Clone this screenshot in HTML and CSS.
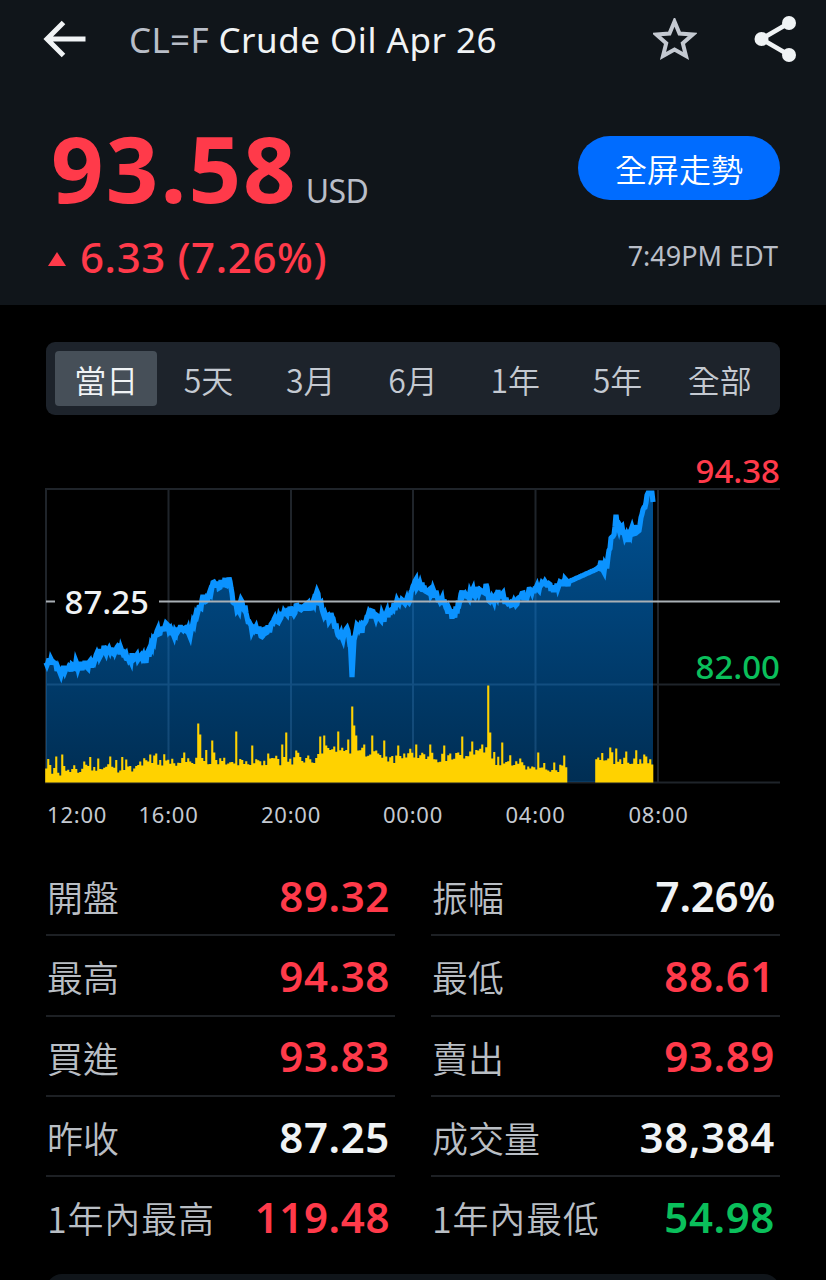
FILE: index.html
```html
<!DOCTYPE html>
<html lang="zh-Hant">
<head>
    <meta charset="UTF-8">
    <title>CL=F Crude Oil Apr 26</title>
    <link rel="stylesheet" href="styles.css">
</head>
<body>
    <header>
        <div class="topbar">
            <svg class="back" width="44" height="40" viewBox="0 0 44 40">
                <path d="M42.500 19H4M20.500 2.500L4 19l16.500 16.500" fill="none" stroke="#f0f3f5" stroke-width="5"/>
            </svg>
            <h1><span class="symbol">CL=F</span> Crude Oil Apr 26</h1>
            <svg class="star" width="44" height="44" viewBox="0 0 44 44">
                <path d="M21.500 3.500l5 12 13.300 1-10 8.800 3.200 12.700-11.500-6.500L10 38l3.200-12.700-10-8.800 13.300-1z" fill="none" stroke="#c4c9d1" stroke-width="4"/>
            </svg>
            <svg class="share" width="44" height="48" viewBox="0 0 44 48">
                <path d="M35 7L7.500 23 35 39" fill="none" stroke="#f0f3f5" stroke-width="4.500"/>
                <circle cx="35" cy="7" r="7" fill="#f0f3f5"/>
                <circle cx="7.500" cy="23" r="7" fill="#f0f3f5"/>
                <circle cx="35" cy="39" r="7" fill="#f0f3f5"/>
            </svg>
        </div>
        <div class="quote">
            <div class="price">93.58<span class="currency">USD</span></div>
            <button type="button">全屏走勢</button>
        </div>
        <div class="change-row">
            <div class="change"><span class="triangle"></span>6.33 (7.26%)</div>
            <div class="time">7:49PM EDT</div>
        </div>
    </header>

    <nav>
        <a class="active">當日</a>
        <a>5天</a>
        <a>3月</a>
        <a>6月</a>
        <a>1年</a>
        <a>5年</a>
        <a>全部</a>
    </nav>

    <svg id="chart" width="826" height="400" viewBox="0 440 826 400">
        <defs>
            <linearGradient id="areaFill" gradientUnits="userSpaceOnUse" x1="0" y1="489" x2="0" y2="782">
                <stop offset="0" stop-color="#0087f5" stop-opacity="0.6"/>
                <stop offset="1" stop-color="#0087f5" stop-opacity="0.34"/>
            </linearGradient>
        </defs>
        <path class="grid" d="M45 489H780M45 684.500H780M45 782.500H780M46 489V783M168.500 489V783M291 489V783M413 489V783M535.500 489V783M658 489V783"/>
        <path id="area" fill="url(#areaFill)"/>
        <path id="volume"/>
        <path id="line"/>
        <path class="prev" d="M46 601.500H55M159 601.500H780"/>
        <text class="prev-label" x="64.500" y="614">87.25</text>
        <text class="high" x="780" y="482.500" text-anchor="end">94.38</text>
        <text class="low" x="780" y="678.500" text-anchor="end">82.00</text>
        <g class="axis">
            <text x="47" y="823">12:00</text>
            <text x="168.500" y="823" text-anchor="middle">16:00</text>
            <text x="291" y="823" text-anchor="middle">20:00</text>
            <text x="413" y="823" text-anchor="middle">00:00</text>
            <text x="535.500" y="823" text-anchor="middle">04:00</text>
            <text x="658.500" y="823" text-anchor="middle">08:00</text>
        </g>
    </svg>

    <section class="stats">
        <div class="stat"><span>開盤</span><b class="up">89.32</b></div>
        <div class="stat"><span>振幅</span><b class="percent">7.26%</b></div>
        <div class="stat"><span>最高</span><b class="up">94.38</b></div>
        <div class="stat"><span>最低</span><b class="up">88.61</b></div>
        <div class="stat"><span>買進</span><b class="up">93.83</b></div>
        <div class="stat"><span>賣出</span><b class="up">93.89</b></div>
        <div class="stat"><span>昨收</span><b>87.25</b></div>
        <div class="stat"><span>成交量</span><b>38,384</b></div>
        <div class="stat year"><span>1年內最高</span><b class="up">119.48</b></div>
        <div class="stat year"><span>1年內最低</span><b class="down">54.98</b></div>
    </section>
    <div class="next-card"></div>

    <script src="chart.js"></script>
</body>
</html>
```
FILE: styles.css
```css
* {
    box-sizing: border-box;
}
body {
    margin: 0;
    height: 1280px;
    overflow: hidden;
    background-color: #000;
    color: #f0f3f5;
    font-family: "Noto Sans", "Noto Sans CJK TC", sans-serif;
}
header {
    height: 305px;
    background-color: #10151a;
}
.topbar {
    display: flex;
    align-items: center;
    height: 80px;
    padding: 0 28px 0 43px;
}
.back {
    margin-right: 42px;
}
h1 {
    margin: 0;
    flex: 1;
    font-size: 35px;
    font-weight: normal;
    letter-spacing: 0.5px;
    line-height: 48px;
    white-space: nowrap;
}
.symbol {
    color: #b9bec8;
    letter-spacing: 0.3px;
}
.star {
    margin-right: 57px;
}
.quote {
    display: flex;
    justify-content: space-between;
    align-items: flex-start;
    height: 146px;
    padding: 56px 46px 0 51px;
}
.price {
    color: #ff3a4a;
    font-size: 92px;
    font-weight: bold;
    line-height: 63px;
    letter-spacing: 2.1px;
    white-space: nowrap;
}
.currency {
    margin-left: 8px;
    color: #b9bec8;
    font-size: 32px;
    font-weight: normal;
    letter-spacing: -0.7px;
}
button {
    width: 202px;
    height: 64px;
    padding: 0;
    border: none;
    border-radius: 32px;
    background-color: #006cff;
    color: #fff;
    font-family: "Noto Sans CJK TC", sans-serif;
    font-size: 32px;
    font-weight: 350;
}
.change-row {
    display: flex;
    justify-content: space-between;
    align-items: center;
    height: 60px;
    padding: 0 48px 0 48px;
}
.change {
    display: flex;
    align-items: center;
    color: #ff3a4a;
    font-size: 42px;
    font-weight: 500;
    letter-spacing: 0.6px;
}
.triangle {
    margin: 5px 14px 0 0;
    border: 9.500px solid transparent;
    border-top: none;
    border-bottom: 14px solid #ff3a4a;
}
.time {
    padding-bottom: 2px;
    color: #b9bec8;
    font-size: 27px;
}
nav {
    display: flex;
    height: 73px;
    margin: 37px 46px 25px;
    padding: 9px;
    border-radius: 9px;
    background-color: #1d232b;
}
nav a {
    flex: 1;
    border-radius: 4px;
    color: #c4c9d1;
    font-family: "Noto Sans CJK TC", sans-serif;
    font-size: 32px;
    font-weight: 350;
    line-height: 57px;
    text-align: center;
}
nav a.active {
    background-color: #464f58;
    color: #f0f3f5;
}
#chart {
    display: block;
    height: 400px;
}
.grid {
    fill: none;
    stroke: #1f242a;
    stroke-width: 2;
}
#line {
    fill: none;
    stroke: #0b93ff;
    stroke-width: 5.200;
}
#volume {
    fill: #ffd200;
}
.prev {
    stroke: #a9b0b5;
    stroke-width: 2;
}
#chart text {
    font-size: 33px;
    font-weight: 500;
}
#chart .prev-label {
    fill: #f0f3f5;
}
#chart .high {
    fill: #ff3a4a;
}
#chart .low {
    fill: #0abf5b;
}
#chart .axis text {
    fill: #c4c9d1;
    font-size: 22px;
    font-weight: normal;
    letter-spacing: 0.8px;
}
.stats {
    display: grid;
    grid-template-columns: 1fr 1fr;
    column-gap: 36px;
    margin: 16px 46px 0;
}
.stat {
    display: flex;
    justify-content: space-between;
    align-items: center;
    height: 80.300px;
    padding: 0 5px 0 1px;
    border-bottom: 2px solid #1d2024;
    white-space: nowrap;
}
.stat:nth-last-child(-n+2) {
    border-bottom-color: transparent;
}
.stat span {
    color: #b9bec4;
    font-family: "Noto Sans CJK TC", sans-serif;
    font-size: 36px;
    font-weight: 350;
    line-height: 54px;
    padding-top: 2px;
}
.year span {
    letter-spacing: 0.8px;
}
.stat b {
    font-size: 42px;
    font-weight: 600;
    letter-spacing: 0.6px;
}
.stat .percent {
    letter-spacing: -0.2px;
}
.up {
    color: #ff3a4a;
}
.down {
    color: #0abf5b;
}
.next-card {
    height: 40px;
    margin: 17px 46px 0;
    border-radius: 16px;
    background-color: #10151a;
}
```
FILE: chart.js
```js
const prices = [
    [46,667],[51,660],[54,663],[58,671],[62,673],[66,668],[72,669],[77,665],[82,666],[90,664],[96,656],
    [102,651],[110,648],[118,650],[124,654],[128,661],[134,655],[140,657],[146,659],[150,650],[155,636],
    [160,630],[165,627],[172,633],[178,630],[184,629],[190,634],[194,622],[199,610],[203,598],[208,600],
    [213,582],[218,586],[224,583],[229,580],[233,598],[237,610],[242,602],[246,612],[251,628],[256,628],
    [262,634],[268,629],[276,620],[283,612],[292,611],[305,608],[312,606],[317,592],[321,606],[326,620],
    [332,617],[338,632],[342,638],[346,628],[350,636],[352,677],[354,640],[357,625],[362,630],[368,613],
    [376,616],[384,618],[390,612],[397,604],[404,601],[410,598],[416,583],[424,588],[432,592],[440,598],
    [446,606],[452,615],[458,608],[462,594],[470,594],[478,592],[487,588],[489,604],[494,598],[500,592],
    [505,600],[514,602],[520,599],[530,592],[538,587],[545,583],[553,590],[560,584],[568,582],[597,569],
    [601,561],[604,570],[608,560],[610,545],[614,532],[616,516],[619,528],[624,532],[628,541],[632,529],
    [638,530],[642,517],[646,500],[648,493],[652,493],[653,502]
];

// typical bar height along the session
const volumeBase = [
    [46,14],[60,11],[75,9],[90,15],[130,14],[145,22],[165,20],[200,23],[240,20],[260,20],[290,22],
    [310,20],[325,30],[350,32],[370,30],[395,22],[410,30],[430,22],[460,27],[485,33],[490,28],
    [500,18],[530,15],[570,13],[596,20],[654,22]
];

const spikes = {
    56: 26, 62: 28, 84: 21, 110: 26, 126: 23, 156: 29, 184: 30, 198: 59, 200: 48, 212: 42, 214: 30,
    236: 51, 252: 37, 282: 38, 286: 50, 296: 32, 320: 46, 324: 47, 338: 51, 348: 43, 352: 76, 354: 57,
    356: 47, 364: 38, 372: 47, 384: 42, 398: 37, 416: 38, 430: 38, 444: 37, 462: 46, 472: 41, 482: 38,
    488: 97, 490: 50, 502: 40, 520: 24, 538: 30, 554: 20, 564: 27, 598: 25, 610: 35, 616: 34, 626: 31,
    644: 28
};

let seed = 11;
function noise() {
    seed = (seed * 16807) % 2147483647;
    return seed / 2147483647;
}

function valueAt(points, x) {
    for (let i = 1; i < points.length; i++) {
        const [x0, y0] = points[i - 1];
        const [x1, y1] = points[i];
        if (x <= x1) {
            return y0 + (y1 - y0) * (x - x0) / (x1 - x0);
        }
    }
    return points[points.length - 1][1];
}

function drawPrice() {
    let d = '';
    for (let x = 46; x <= 653; x++) {
        const quiet = (x > 568 && x < 597) || (x > 349 && x < 355) || x > 647;
        const y = valueAt(prices, x) + (quiet ? 0 : (noise() - 0.5) * 9);
        d += (d ? 'L' : 'M') + x + ' ' + y.toFixed(1);
    }
    document.getElementById('line').setAttribute('d', d);
    document.getElementById('area').setAttribute('d', d + 'V782H46Z');
}

function drawVolume() {
    let d = '';
    for (let x = 46; x <= 652; x += 2) {
        if (x > 566 && x < 596) continue;
        let h = valueAt(volumeBase, x) + (noise() - 0.5) * 9;
        if (noise() > 0.8) h += 7;
        h = spikes[x] || h;
        const left = x - 0.8;
        d += `M${left} 782.500v${-h.toFixed(1)}h2.100v${h.toFixed(1)}z`;
    }
    document.getElementById('volume').setAttribute('d', d);
}

drawPrice();
drawVolume();
```
